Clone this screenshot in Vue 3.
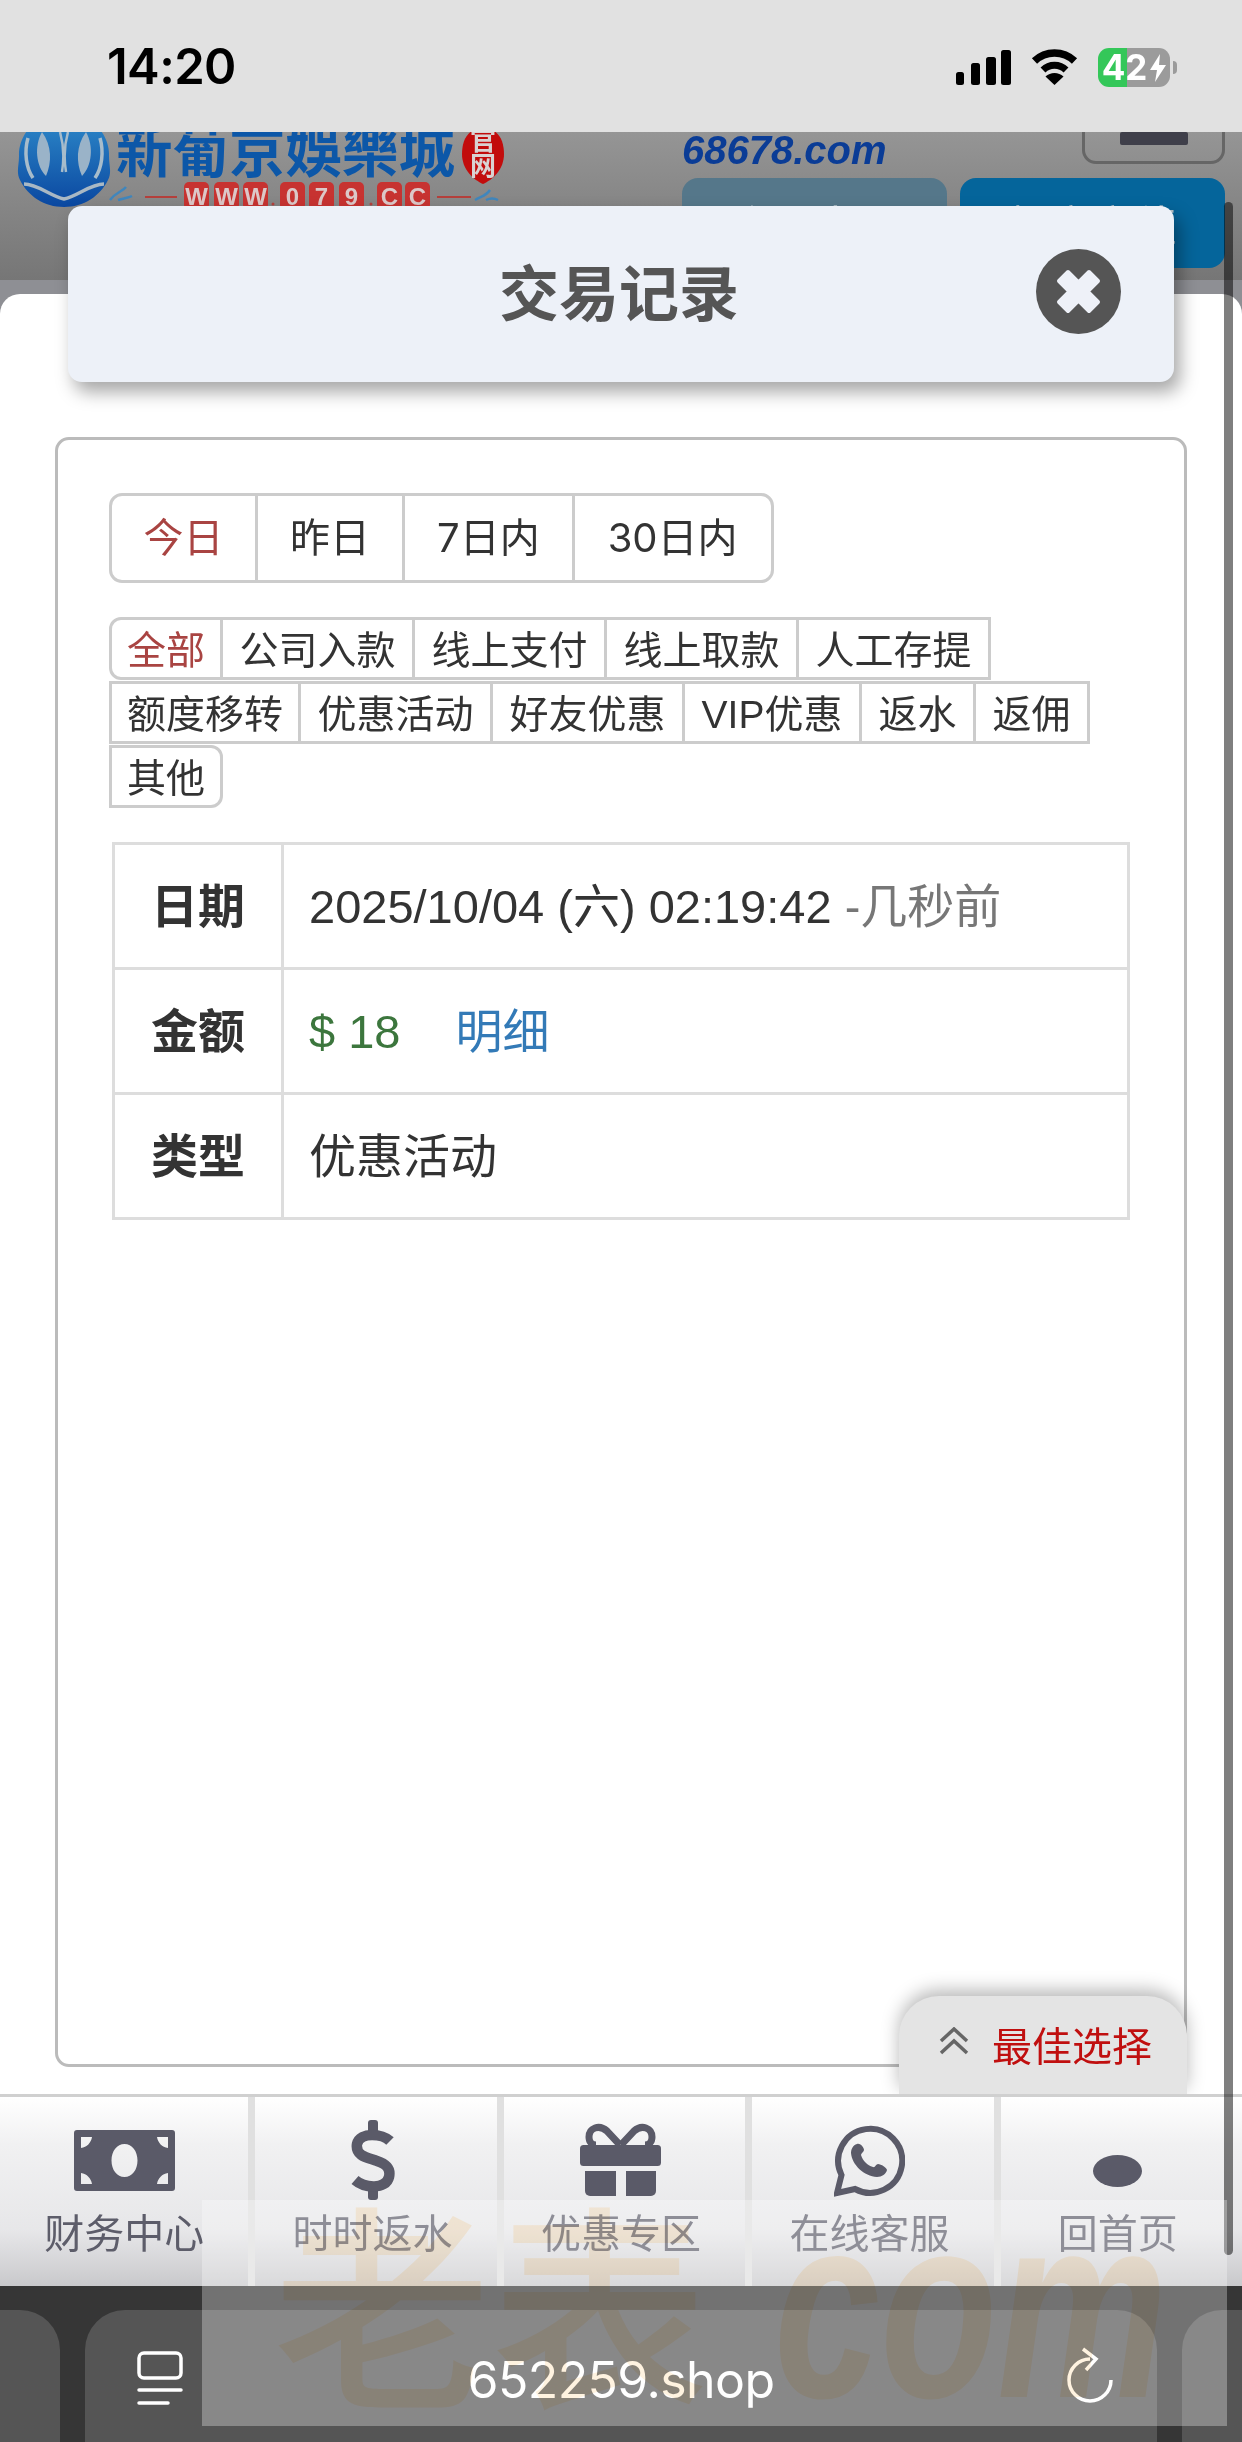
<script setup>
const dateTabs = ['今日', '昨日', '7日内', '30日内']
const typeTabs = [
  { t: '全部', active: true, start: true, cls: 'r-left' },
  { t: '公司入款' }, { t: '线上支付' }, { t: '线上取款' }, { t: '人工存提' },
  { t: '额度移转', start: true }, { t: '优惠活动' }, { t: '好友优惠' }, { t: 'VIP优惠' }, { t: '返水' }, { t: '返佣' },
  { t: '其他', start: true, cls: 'r-right' }
]
const wwwChars = [
  { c: 'W', x: 184 }, { c: 'W', x: 214 }, { c: 'W', x: 243 },
  { c: '0', x: 280 }, { c: '7', x: 309 }, { c: '9', x: 339 },
  { c: 'C', x: 377 }, { c: 'C', x: 405 }
]
</script>

<template>
  <div class="phone">
    <div class="status">
      <span class="time">14:20</span>
      <div class="status-icons">
        <svg class="signal" width="55" height="35" viewBox="0 0 55 35" fill="#000">
          <rect x="0" y="22" width="8" height="13" rx="2.5" />
          <rect x="15" y="13" width="9" height="22" rx="2.5" />
          <rect x="30" y="7" width="10" height="28" rx="2.5" />
          <rect x="45" y="0" width="10" height="35" rx="2.5" />
        </svg>
        <svg class="wifi" width="47" height="36" viewBox="0 0 47 36">
          <path d="M3.5 12 A 29 29 0 0 1 43.5 12" fill="none" stroke="#000" stroke-width="7.5" />
          <path d="M12 21 A 16.5 16.5 0 0 1 35 21" fill="none" stroke="#000" stroke-width="7" />
          <path d="M23.5 36 L14.5 27.5 A 13 13 0 0 1 32.5 27.5 Z" fill="#000" />
        </svg>
        <div class="battery">
          <span class="bat-num">42</span>
          <svg width="16" height="28" viewBox="0 0 16 28" fill="#fff"><path d="M10 0 L0 16 H7 L5 28 L16 11 H9 Z" /></svg>
        </div>
        <span class="bat-nub"></span>
      </div>
    </div>

    <header class="site">
      <svg class="logo" width="520" height="76" viewBox="0 132 520 76">
        <defs>
          <linearGradient id="lg" x1="0" y1="0" x2="0" y2="1">
            <stop offset="0" stop-color="#2f8ccb" />
            <stop offset="1" stop-color="#0a47a0" />
          </linearGradient>
        </defs>
        <path d="M64 112 C90 112 110 134 109 156 C109 166 112 172 108 180 C100 196 84 207 64 207 C44 207 28 196 20 180 C16 172 19 166 19 156 C18 134 38 112 64 112 Z" fill="url(#lg)" />
        <path d="M28 138 C24 152 26 168 33 178 M100 138 C104 152 102 168 95 178" fill="none" stroke="#a7bccb" stroke-width="3.5" />
        <path d="M42 132 C34 146 36 166 46 176 C52 162 52 146 42 132 Z M86 132 C94 146 92 166 82 176 C76 162 76 146 86 132 Z" fill="#9ab3c8" />
        <path d="M60 132 C64 146 64 160 62 172 M68 132 C64 146 64 160 66 172" fill="none" stroke="#a7bccb" stroke-width="2.5" />
        <path d="M24 184 C38 184 50 196 64 199 C78 196 90 184 104 184" fill="none" stroke="#a9b8c4" stroke-width="3.5" />
        <text x="116" y="172" class="brand">新葡京娛樂城</text>
        <path d="M483 128 C498 128 504 140 504 154 C504 170 492 180 483 184 C474 180 462 170 462 154 C462 140 468 128 483 128 Z" fill="#c20c0c" />
        <text x="483" y="150" class="seal">官</text>
        <text x="483" y="175" class="seal">网</text>
        <rect x="145" y="196" width="32" height="2" fill="#b5403c" />
        <rect x="437" y="196" width="34" height="2" fill="#b5403c" />
        <rect v-for="(b, i) in wwwChars" :key="'b' + i" :x="b.x" y="182" width="25" height="28" rx="5" fill="#c73331" />
        <text v-for="(b, i) in wwwChars" :key="'t' + i" :x="b.x + 12.5" y="205" class="box-char">{{ b.c }}</text>
        <circle cx="273" cy="204" r="1.5" fill="#b5403c" />
        <circle cx="371" cy="204" r="1.5" fill="#b5403c" />
        <path d="M110 200 C116 192 122 192 126 187 M118 200 C124 198 128 198 132 196" fill="none" stroke="#3f86bd" stroke-width="2.5" />
        <path d="M475 200 C482 196 486 196 490 190 M486 200 C490 198 494 198 498 200" fill="none" stroke="#3f86bd" stroke-width="2.5" />
      </svg>
      <div class="site-right">
        <div class="site-top">
          <span class="domain">68678.com</span>
          <div class="menu-btn"><span class="menu-bar"></span></div>
        </div>
        <div class="site-btns">
          <div class="sbtn muted">会员中心</div>
          <div class="sbtn blue">帐户充值</div>
        </div>
      </div>
    </header>

    <main class="panel">
      <section class="box">
        <div class="date-tabs">
          <span v-for="(d, i) in dateTabs" :key="d" class="date-tab" :class="{ active: i === 0 }">{{ d }}</span>
        </div>
        <div class="type-tabs">
          <span
            v-for="t in typeTabs"
            :key="t.t"
            class="type-tab"
            :class="[t.cls, { active: t.active, start: t.start }]"
          >{{ t.t }}</span>
        </div>
        <table class="record">
          <tbody>
            <tr>
              <th>日期</th>
              <td>2025/10/04 (六) 02:19:42 <span class="ago">-几秒前</span></td>
            </tr>
            <tr>
              <th>金额</th>
              <td><span class="amount">$ 18</span><span class="detail">明细</span></td>
            </tr>
            <tr>
              <th>类型</th>
              <td>优惠活动</td>
            </tr>
          </tbody>
        </table>
      </section>
      <div class="best">
        <svg width="30" height="28" viewBox="0 0 30 28" fill="none" stroke="#666" stroke-width="3.5">
          <path d="M2 14 L15 2 L28 14" />
          <path d="M2 26 L15 14 L28 26" />
        </svg>
        <span>最佳选择</span>
      </div>
    </main>

    <nav class="tabbar">
      <div class="nav-item">
        <svg width="101" height="80" viewBox="0 -10 101 80" fill="#5a5a68">
          <path fill-rule="evenodd" d="M3 0 H98 A3 3 0 0 1 101 3 V58 A3 3 0 0 1 98 61 H3 A3 3 0 0 1 0 58 V3 A3 3 0 0 1 3 0 Z M7 7 V18 C13 17 17 13 18 7 Z M94 7 H83 C84 13 88 17 94 18 Z M7 54 H18 C17 48 13 44 7 43 Z M94 54 V43 C88 44 84 48 83 54 Z M50.5 14 C43 14 37.500 21 37.500 30.500 C37.500 40 43 47 50.500 47 C58 47 63.500 40 63.500 30.500 C63.500 21 58 14 50.500 14 Z" />
        </svg>
        <span class="nav-label">财务中心</span>
      </div>
      <div class="nav-item">
        <svg width="46" height="80" viewBox="0 0 46 80" fill="#5a5a68">
          <rect x="18" y="0" width="10" height="14" rx="3" />
          <rect x="18" y="66" width="10" height="14" rx="3" />
          <path d="M40 21 C33 14 10 11 7 24 C5 37 20 38 27 41 C36 44 41 48 39 57 C36 70 14 68 5 60" fill="none" stroke="#5a5a68" stroke-width="10.500" />
        </svg>
        <span class="nav-label">时时返水</span>
      </div>
      <div class="nav-item">
        <svg width="81" height="80" viewBox="0 -5 81 80" fill="#5a5a68">
          <path d="M40 20 L27 6 C19 -1 9 3 9 12 C9 17 12 20 16 20" fill="none" stroke="#5a5a68" stroke-width="7" />
          <path d="M41 20 L54 6 C62 -1 72 3 72 12 C72 17 69 20 65 20" fill="none" stroke="#5a5a68" stroke-width="7" />
          <rect x="0" y="20" width="81" height="21" rx="3.500" />
          <path d="M5 46 H36 V71 H10 A5 5 0 0 1 5 66 Z" />
          <path d="M46 46 H76 V66 A5 5 0 0 1 71 71 H46 Z" />
        </svg>
        <span class="nav-label">优惠专区</span>
      </div>
      <div class="nav-item">
        <svg width="71" height="80" viewBox="0 -5 71 80">
          <path d="M21 64 A 32 32 0 1 0 7.500 50 L 3 68 Z" fill="none" stroke="#5a5a68" stroke-width="6" />
          <path d="M23 19 C19 20 17 24 17 28 C18 40 30 51 43 52 C48 52 52 49 53 45 C53 43 47 39 44 39 C42 39 41 43 39 42 C33 40 29 36 27 30 C27 28 30 27 30 25 C30 23 27 18 23 19 Z" fill="#5a5a68" />
        </svg>
        <span class="nav-label">在线客服</span>
      </div>
      <div class="nav-item">
        <svg width="49" height="80" viewBox="0 0 49 80">
          <ellipse cx="24.500" cy="51" rx="24.500" ry="16" fill="#5a5a68" />
        </svg>
        <span class="nav-label">回首页</span>
      </div>
    </nav>

    <div class="browser">
      <div class="stub stub-left"></div>
      <div class="url">
        <svg class="url-tabs" width="46" height="56" viewBox="0 0 46 56" fill="none" stroke="#fff" stroke-width="3.500" stroke-linecap="round">
          <rect x="2" y="2" width="42" height="25" rx="5" />
          <path d="M2 39 H44" />
          <path d="M2 52 H31" />
        </svg>
        <span class="url-text">652259.shop</span>
        <svg class="url-reload" width="50" height="58" viewBox="0 0 50 58" fill="none" stroke="#fff" stroke-width="3.500">
          <path d="M23 12 A21 21 0 1 0 44 33" />
          <path d="M16 2 L29 12 L19 23" />
        </svg>
      </div>
      <div class="stub stub-right"></div>
    </div>

    <div class="scrollbar"></div>

    <div class="modal-head">
      <h1 class="modal-title">交易记录</h1>
      <svg class="close" width="85" height="85" viewBox="0 0 85 85">
        <circle cx="42.500" cy="42.500" r="42.500" fill="#555" />
        <path d="M23 32 L32 23 L42.500 33.500 L53 23 L62 32 L51.500 42.500 L62 53 L53 62 L42.500 51.500 L32 62 L23 53 L33.500 42.500 Z" fill="#eef1f8" stroke="#eef1f8" stroke-width="4" stroke-linejoin="round" />
      </svg>
    </div>

    <div class="veil"></div>
    <div class="mark">
      <span class="mark-cn">老表</span>
      <span class="mark-en">com</span>
    </div>
  </div>
</template>

<style scoped>
.phone {
  position: relative;
  width: 1242px;
  height: 2442px;
  display: flex;
  flex-direction: column;
  overflow: hidden;
  background: #8e8f94;
  font-family: "Liberation Sans", "Noto Sans CJK SC", sans-serif;
  color: #333;
}

/* status bar */
.status {
  height: 132px;
  flex: none;
  background: #e1e1e1;
  display: flex;
  align-items: flex-start;
  justify-content: space-between;
  padding: 0 65px 0 107px;
  position: relative;
  z-index: 3;
}
.time {
  margin-top: 38px;
  font: 600 49px/58px Inter, sans-serif;
  color: #000;
  letter-spacing: -.6px;
}
.status-icons {
  margin-top: 48px;
  display: flex;
  align-items: flex-start;
}
.signal { margin-top: 2px; }
.wifi { margin: 1px 20px 0 20px; }
.battery {
  width: 72px;
  height: 39px;
  border-radius: 11px;
  background: linear-gradient(90deg, #34c759 40.500%, #9b9b9b 40.500%);
  display: flex;
  align-items: center;
  justify-content: center;
  gap: 3px;
}
.bat-num {
  font: 700 35px/39px Inter, sans-serif;
  color: #fff;
  letter-spacing: 0;
}
.bat-nub {
  width: 4px;
  height: 13px;
  margin: 13px 0 0 3px;
  background: #9b9b9b;
  border-radius: 0 4px 4px 0;
}

/* page behind the dialog */
.site {
  height: 148px;
  flex: none;
  background: linear-gradient(#959595, #767676);
  display: flex;
  justify-content: space-between;
  overflow: hidden;
  padding-right: 17px;
}
.logo { flex: none; display: block; }
.brand {
  font: 700 56.500px "Noto Sans CJK TC", sans-serif;
  fill: #0c57a8;
}
.seal {
  font: 700 26px "Noto Sans CJK SC", sans-serif;
  fill: #d9d2d2;
  text-anchor: middle;
}
.box-char {
  font: 700 24px "Liberation Sans", sans-serif;
  fill: #dcc8c8;
  text-anchor: middle;
}
.site-right {
  width: 543px;
  display: flex;
  flex-direction: column;
}
.site-top {
  height: 46px;
  display: flex;
  justify-content: space-between;
  align-items: flex-start;
}
.domain {
  margin: -4px 0 0 0;
  font: italic 700 40px/44px "Liberation Sans", sans-serif;
  color: #0a3c96;
}
.menu-btn {
  width: 143px;
  height: 72px;
  margin-top: -40px;
  border: 3px solid #666;
  border-radius: 14px;
  display: flex;
  align-items: flex-start;
  justify-content: center;
  box-sizing: border-box;
  padding-top: 37px;
}
.menu-bar {
  width: 68px;
  height: 13px;
  border-radius: 2px;
  background: #3f3f4a;
}
.site-btns {
  display: flex;
  justify-content: space-between;
}
.sbtn {
  width: 265px;
  height: 90px;
  border-radius: 16px;
  text-align: center;
  font: 400 42px/90px "Noto Sans CJK SC", sans-serif;
  color: #b8c4cc;
}
.sbtn.muted { background: #55778a; }
.sbtn.blue { background: #05659b; }

/* white sheet */
.panel {
  position: relative;
  flex: 1;
  margin-top: 14px;
  background: #fff;
  border-radius: 20px 20px 0 0;
  padding: 143px 55px 0;
  box-sizing: border-box;
}
.box {
  height: 1630px;
  box-sizing: border-box;
  border: 3px solid #bbb;
  border-radius: 14px;
  padding: 53px 51px 0;
}
.date-tabs {
  display: inline-flex;
  border: 3px solid #ccc;
  border-radius: 13px;
  height: 90px;
  box-sizing: border-box;
  vertical-align: top;
}
.date-tab {
  padding: 0 32px;
  font: 400 40px/84px Inter, "Noto Sans CJK SC", sans-serif;
  border-left: 3px solid #ccc;
}
.date-tab:first-child { border-left: 0; padding: 0 31.500px; }
.date-tab:last-child { padding: 0 33px; }
.date-tab.active, .type-tab.active { color: #a94442; }

.type-tabs {
  display: flex;
  flex-wrap: wrap;
  row-gap: 1px;
  margin-top: 34px;
}
.type-tab {
  height: 63px;
  box-sizing: border-box;
  border: 3px solid #ccc;
  border-left: 0;
  padding: 0 16.500px;
  font-size: 39px;
  line-height: 62px;
  white-space: nowrap;
}
.type-tab.start {
  border-left: 3px solid #ccc;
  padding: 0 15px;
}
.type-tab.r-left { border-radius: 12px 0 0 12px; }
.type-tab.r-right { border-radius: 0 12px 12px 0; }

.record {
  width: 1018px;
  margin: 34px 0 0 3px;
  border-collapse: collapse;
  table-layout: fixed;
  font-size: 47px;
}
.record th, .record td {
  border: 3px solid #ddd;
  height: 114px;
  padding: 0 0 8px;
}
.record th {
  width: 166px;
  font-weight: 700;
  text-align: center;
}
.record td { padding-left: 25px; }
.ago { color: #777; }
.amount { color: #3c763d; }
.detail { color: #337ab7; margin-left: 55px; }

.best {
  position: absolute;
  right: 55px;
  bottom: 0;
  width: 288px;
  height: 98px;
  box-sizing: border-box;
  padding: 27px 0 0 40px;
  display: flex;
  align-items: flex-start;
  gap: 23px;
  background: #e4e4e4;
  border-radius: 40px 40px 0 0;
  box-shadow: 0 -6px 18px rgba(0, 0, 0, .28);
  font-size: 40px;
  line-height: 48px;
  color: #c00f0f;
}
.best svg { margin-top: 4px; }

/* tab bar */
.tabbar {
  position: relative;
  z-index: 1;
  height: 192px;
  flex: none;
  box-sizing: border-box;
  border-top: 3px solid #d0d0d0;
  display: grid;
  grid-template-columns: repeat(5, 1fr);
  background: linear-gradient(#fff 0, #f1f1f2 25%, #e7e7e9 70%, #c9c9cc 100%);
}
.nav-item {
  display: flex;
  flex-direction: column;
  align-items: center;
  padding-top: 23px;
  background: linear-gradient(#e0e0e0, #e0e0e0) no-repeat left top / 7px 100%;
}
.nav-item:first-child { background: none; }
.nav-item svg { display: block; flex: none; }
.nav-label {
  margin-top: 10px;
  font-size: 40px;
  line-height: 48px;
  color: #5d5d6a;
}

/* browser chrome */
.browser {
  height: 156px;
  flex: none;
  background: #363636;
  display: flex;
  align-items: flex-end;
  gap: 25px;
}
.stub, .url {
  height: 132px;
  background: #555;
}
.stub-left {
  width: 60px;
  border-radius: 0 40px 0 0;
}
.stub-right {
  width: 60px;
  border-radius: 40px 0 0 0;
}
.url {
  flex: 1;
  position: relative;
  border-radius: 40px 40px 0 0;
  display: flex;
  align-items: center;
  justify-content: center;
}
.url-text {
  position: relative;
  top: 4px;
  font: 400 50px/60px Inter, sans-serif;
  letter-spacing: -.6px;
  color: #fff;
}
.url-tabs {
  position: absolute;
  left: 52px;
  top: 41px;
}
.url-reload {
  position: absolute;
  right: 40px;
  top: 37px;
}

/* overlays */
.scrollbar {
  position: absolute;
  z-index: 4;
  left: 1224px;
  top: 202px;
  width: 9px;
  height: 2053px;
  border-radius: 5px;
  background: rgba(0, 0, 0, .5);
}
.modal-head {
  position: absolute;
  z-index: 5;
  left: 68px;
  top: 206px;
  width: 1106px;
  height: 176px;
  box-sizing: border-box;
  padding: 0 4px 10px 0;
  border-radius: 14px;
  background: #edf1f8;
  box-shadow: 6px 10px 18px rgba(0, 0, 0, .35);
  display: flex;
  align-items: center;
  justify-content: center;
}
.modal-title {
  margin: 0;
  font-size: 60px;
  font-weight: 700;
  color: #555;
}
.close {
  position: absolute;
  right: 53px;
  top: 43px;
}
.veil {
  position: absolute;
  z-index: 6;
  left: 202px;
  top: 2200px;
  width: 1025px;
  height: 226px;
  background: rgba(255, 255, 255, .3);
}
.mark {
  position: absolute;
  z-index: 7;
  left: 202px;
  top: 2200px;
  width: 1025px;
  height: 226px;
  overflow: hidden;
  mix-blend-mode: multiply;
  color: #fff3e0;
}
.mark-cn {
  position: absolute;
  left: 71px;
  top: -43px;
  font: 500 218px/280px "Noto Sans CJK SC", sans-serif;
  white-space: nowrap;
}
.mark-en {
  position: absolute;
  left: 572px;
  top: -43px;
  font: italic 700 262px/300px "Liberation Sans", sans-serif;
  transform: scaleX(.73);
  transform-origin: left top;
}
</style>
